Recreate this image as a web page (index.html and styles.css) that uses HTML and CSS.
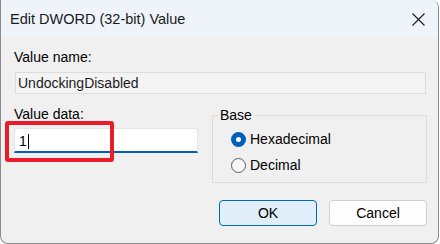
FILE: index.html
```html
<!DOCTYPE html>
<html>
<head>
  <meta charset="utf-8">
  <title>Edit DWORD (32-bit) Value</title>
  <link rel="stylesheet" href="styles.css">
</head>
<body>
  <div class="window">
    <div class="titlebar">
      <span class="title">Edit DWORD (32-bit) Value</span>
      <svg class="close" width="13" height="13" viewBox="0 0 13 13">
        <path d="M0.5 0.5 L12.5 12.5 M12.5 0.5 L0.5 12.5" stroke="#1b1b1b" stroke-width="1.1" fill="none"/>
      </svg>
    </div>

    <div class="content">
      <div class="label">Value name:</div>
      <div class="name-field">UndockingDisabled</div>

      <div class="data-row">
        <div class="data-col">
          <div class="label">Value data:</div>
          <div class="data-input">1<span class="caret"></span></div>
          <!-- highlight drawn over the input -->
          <div class="highlight"></div>
        </div>

        <fieldset class="base-group">
          <legend>Base</legend>
          <div class="radio-row">
            <span class="radio checked"></span>
            <span>Hexadecimal</span>
          </div>
          <div class="radio-row">
            <span class="radio"></span>
            <span>Decimal</span>
          </div>
        </fieldset>
      </div>

      <div class="buttons">
        <button class="btn primary">OK</button>
        <button class="btn">Cancel</button>
      </div>
    </div>
  </div>
</body>
</html>
```

FILE: styles.css
```css
body {
  margin: 0;
  background-color: #ffffff;
  font-family: "Liberation Sans", Arial, sans-serif;
  font-size: 14px;
  line-height: 16px;
  color: #000000;
}

.window {
  box-sizing: border-box;
  width: 439px;
  height: 244px;
  border: 1px solid #8a8a8a;
  border-top: none;
  border-radius: 0 8px 8px 8px;
  background-color: #f0f0f0;
  overflow: hidden;
}

.titlebar {
  height: 37px;
  display: flex;
  align-items: center;
  justify-content: space-between;
  padding: 0 13px 0 9px;
  background-color: #eef4f9;
}

.title {
  font-size: 14.5px;
  color: #1a1a1a;
  padding-top: 1px;
}

.close {
  display: block;
  margin-top: 1px;
}

.content {
  padding: 12px 11px 0 12px;
}

.label {
  height: 16px;
  padding-left: 1px;
}

.name-field {
  margin: 7px 1px 0 2px;
  height: 16px;
  padding: 2px 2px;
  border: 1px solid #dcdcdc;
  background-color: #f4f4f4;
  color: #1a1a1a;
}

.data-row {
  display: grid;
  grid-template-columns: 185px 1fr;
  column-gap: 14px;
  margin-top: 12px;
}

.data-col {
  position: relative;
}

.data-input {
  margin: 6px 0 0 1px;
  height: 16px;
  padding: 4px 4px 2px 4px;
  border: 1px solid #e4e4e4;
  border-bottom: 2px solid #005fb8;
  border-radius: 3px 3px 0 0;
  background-color: #ffffff;
  box-sizing: content-box;
}

.caret {
  display: inline-block;
  width: 1px;
  height: 15px;
  margin-left: 1px;
  vertical-align: -3px;
  background-color: #000000;
}

.highlight {
  position: absolute;
  left: -8px;
  top: 15px;
  width: 101px;
  height: 33px;
  border: 4px solid #ea1c2a;
  border-radius: 3px;
}

.base-group {
  margin: 1px 0 0 0;
  padding: 3px 8px 4px 18px;
  border: 1px solid #dcdcdc;
  min-width: 0;
}

.base-group legend {
  padding: 0 2px;
  margin-left: -13px;
}

.radio-row {
  display: flex;
  align-items: center;
  height: 26px;
  gap: 4px;
}

.radio {
  box-sizing: border-box;
  width: 15px;
  height: 15px;
  border-radius: 50%;
  border: 1px solid #5c5c5c;
  background-color: #f7f7f7;
}

.radio.checked {
  border: 5px solid #005fb8;
  background-color: #ffffff;
}

.buttons {
  display: flex;
  justify-content: flex-end;
  gap: 12px;
  margin-top: 17px;
  padding-right: 0;
}

.btn {
  box-sizing: border-box;
  width: 98px;
  height: 26px;
  border: 1px solid #d0d0d0;
  border-radius: 4px;
  background-color: #fdfdfd;
  font-family: "Liberation Sans", Arial, sans-serif;
  font-size: 14px;
  color: #000000;
  padding: 0;
}

.btn.primary {
  border: 1px solid #0067c0;
  background-color: #e0eef9;
}
```
